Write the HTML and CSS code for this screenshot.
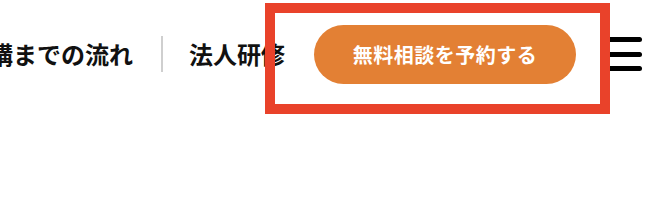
FILE: index.html
```html
<!DOCTYPE html>
<html lang="ja">
<head>
<meta charset="utf-8">
<link rel="stylesheet" href="styles.css">
</head>
<body>
<header class="header">
  <nav class="nav">
    <a class="nav-link">受講までの流れ</a>
    <span class="nav-sep"></span>
    <a class="nav-link">法人研修</a>
  </nav>
  <a class="cta">無料相談を予約する</a>
  <button class="menu" aria-label="menu">
    <span></span><span></span><span></span>
  </button>
  <div class="highlight"></div>
</header>
</body>
</html>
```

FILE: styles.css
```css
html, body {
  margin: 0;
  padding: 0;
  background: #ffffff;
  overflow: hidden;
}
body {
  width: 656px;
  height: 216px;
  font-family: "Noto Sans CJK JP", "Noto Sans", sans-serif;
}
.header {
  position: relative;
  height: 108px;
  display: flex;
  align-items: center;
  justify-content: flex-end;
  padding-right: 14px;
  box-sizing: border-box;
}
.nav {
  display: flex;
  align-items: center;
  flex-shrink: 0;
}
.nav-link {
  font-size: 24px;
  font-weight: 700;
  color: #111111;
  letter-spacing: 0;
  white-space: nowrap;
  line-height: 1;
}
.nav-sep {
  width: 2px;
  height: 36px;
  background: #cfcfcf;
  margin: 0 26px 0 28px;
}
.cta {
  flex-shrink: 0;
  margin-left: 29px;
  width: 262px;
  height: 59px;
  border-radius: 30px;
  background: #e38034;
  color: #ffffff;
  font-size: 20px;
  font-weight: 700;
  letter-spacing: 0.5px;
  display: flex;
  align-items: center;
  justify-content: center;
  white-space: nowrap;
}
.menu {
  flex-shrink: 0;
  margin-left: 32px;
  width: 34px;
  height: 34px;
  padding: 0;
  border: 0;
  background: none;
  display: flex;
  flex-direction: column;
  justify-content: space-between;
}
.menu span {
  display: block;
  height: 5px;
  width: 100%;
  background: #000000;
  border-radius: 3px;
}
.highlight {
  position: absolute;
  left: 265px;
  top: 3px;
  width: 345px;
  height: 111px;
  box-sizing: border-box;
  border: 10px solid #e9422a;
}
```
